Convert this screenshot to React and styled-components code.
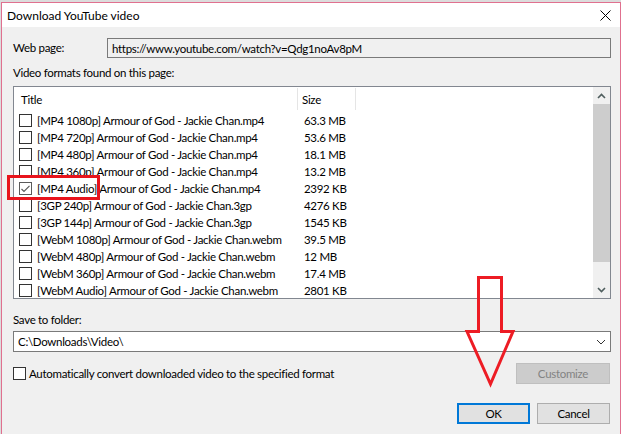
import React from 'react';
import styled, { createGlobalStyle } from 'styled-components';

const GlobalStyle = createGlobalStyle`
  html, body {
    margin: 0;
    height: 434px;
    overflow: hidden;
    background: #dcdcdc;
  }
  body {
    font-family: Lato, "Segoe UI", sans-serif;
    font-size: 11.5px;
    letter-spacing: -0.3px;
    color: #000;
  }
`;

const Window = styled.div`
  position: relative;
  margin: 2px 0 0 1px;
  width: 618px;
  height: 440px;
  border: 1px solid #e0708f;
  background: #f0f0f0;
`;

const TitleBar = styled.div`
  height: 24px;
  display: flex;
  align-items: center;
  justify-content: space-between;
  padding: 0 9px 0 5px;
  background: #fff;
  font-size: 12px;
  letter-spacing: 0;
`;

const Content = styled.div`
  display: flex;
  flex-direction: column;
  padding: 11px 9px 0 11px;
`;

const Row = styled.div`
  display: flex;
  align-items: center;
  justify-content: ${p => p.justify || 'flex-start'};
  gap: ${p => p.gap || '0px'};
  margin-top: ${p => p.mt || '0px'};
  height: ${p => p.h || 'auto'};
`;

const Label = styled.div`
  line-height: 16px;
  width: ${p => p.w || 'auto'};
  margin-top: ${p => p.mt || '0px'};
`;

const ReadOnlyField = styled.div`
  flex: 1;
  height: 18px;
  border: 1px solid #7a7a7a;
  background: #f0f0f0;
  padding-left: 4px;
  display: flex;
  align-items: center;
`;

const ListBox = styled.div`
  margin-top: 5px;
  height: 211px;
  border: 1px solid #828790;
  background: #fff;
  display: flex;
  overflow: hidden;
`;

const ListBody = styled.div`
  flex: 1;
  display: flex;
  flex-direction: column;
`;

const Header = styled.div`
  height: 25px;
  display: flex;
  flex-shrink: 0;
`;

const HeadCell = styled.div`
  width: ${p => p.w};
  padding-left: ${p => p.pl || '6px'};
  border-right: 1px solid #e5e5e5;
  margin: 1px 0 2px;
  display: flex;
  align-items: center;
`;

const ItemRow = styled.div`
  height: 17px;
  flex-shrink: 0;
  display: flex;
  align-items: center;
`;

const TitleCell = styled.div`
  box-sizing: border-box;
  width: 284px;
  display: flex;
  align-items: center;
  padding-left: 5px;
  gap: 5px;
  white-space: nowrap;
`;

const SizeCell = styled.div`
  padding-left: 6px;
  white-space: nowrap;
`;

const Box = styled.span`
  width: 11px;
  height: 11px;
  flex-shrink: 0;
  border: 1px solid ${p => (p.checked ? '#5a5a5a' : '#333')};
  background: #fff;
  display: inline-flex;
  align-items: center;
  justify-content: center;
`;

const ScrollBar = styled.div`
  width: 17px;
  background: #f0f0f0;
  display: flex;
  flex-direction: column;
  align-items: center;
`;

const ScrollArrow = styled.div`
  height: 17px;
  width: 17px;
  display: flex;
  align-items: center;
  justify-content: center;
`;

const Thumb = styled.div`
  width: 17px;
  height: 158px;
  background: #cdcdcd;
`;

const Spacer = styled.div`
  flex: 1;
`;

const Combo = styled.div`
  margin-top: 3px;
  height: 19px;
  border: 1px solid #7a7a7a;
  background: #fff;
  display: flex;
  align-items: center;
  justify-content: space-between;
  padding: 0 4px 0 4px;
`;

const Button = styled.div`
  width: ${p => p.w || '69px'};
  height: ${p => p.h || '17px'};
  display: flex;
  align-items: center;
  justify-content: center;
  background: ${p => (p.disabled ? '#cccccc' : '#e1e1e1')};
  color: ${p => (p.disabled ? '#838383' : '#000')};
  border: ${p => (p.primary ? '2px solid #0078d7' : p.disabled ? '1px solid #bfbfbf' : '1px solid #adadad')};
  margin: ${p => (p.primary ? '0' : '1px')};
`;

const Highlight = styled.div`
  position: absolute;
  left: 5px;
  top: 172px;
  width: 87px;
  height: 19px;
  border: 3px solid #e8141c;
`;

const Arrow = styled.svg`
  position: absolute;
  left: -2px;
  top: -3px;
  pointer-events: none;
`;

const Chevron = ({ up }) => (
  <svg width="9" height="6" viewBox="0 0 9 6">
    <path d={up ? 'M1 5 L4.5 1.5 L8 5' : 'M1 1 L4.5 4.5 L8 1'} fill="none" stroke="#4f5e5e" strokeWidth="1.6" />
  </svg>
);

const Check = () => (
  <svg width="9" height="8" viewBox="0 0 9 8">
    <path d="M0.5 4 L3 6.5 L8.5 0.8" fill="none" stroke="#5a5a5a" strokeWidth="1.2" />
  </svg>
);

const items = [
  ['[MP4 1080p] Armour of God - Jackie Chan.mp4', '63.3 MB'],
  ['[MP4 720p] Armour of God - Jackie Chan.mp4', '53.6 MB'],
  ['[MP4 480p] Armour of God - Jackie Chan.mp4', '18.1 MB'],
  ['[MP4 360p] Armour of God - Jackie Chan.mp4', '13.2 MB'],
  ['[MP4 Audio] Armour of God - Jackie Chan.mp4', '2392 KB', true],
  ['[3GP 240p] Armour of God - Jackie Chan.3gp', '4276 KB'],
  ['[3GP 144p] Armour of God - Jackie Chan.3gp', '1545 KB'],
  ['[WebM 1080p] Armour of God - Jackie Chan.webm', '39.5 MB'],
  ['[WebM 480p] Armour of God - Jackie Chan.webm', '12 MB'],
  ['[WebM 360p] Armour of God - Jackie Chan.webm', '17.4 MB'],
  ['[WebM Audio] Armour of God - Jackie Chan.webm', '2801 KB'],
];

export default function App() {
  return (
    <>
      <GlobalStyle />
      <Window>
        <TitleBar>
          <span>Download YouTube video</span>
          <svg width="11" height="11" viewBox="0 0 11 11">
            <path d="M0.5 0.5 L10.5 10.5 M10.5 0.5 L0.5 10.5" stroke="#000" strokeWidth="1" />
          </svg>
        </TitleBar>
        <Content>
          <Row h="20px">
            <Label w="94px">Web page:</Label>
            <ReadOnlyField>https://www.youtube.com/watch?v=Qdg1noAv8pM</ReadOnlyField>
          </Row>
          <Label mt="7px">Video formats found on this page:</Label>
          <ListBox>
            <ListBody>
              <Header>
                <HeadCell w="276px" pl="7px">Title</HeadCell>
                <HeadCell w="53px" pl="4px">Size</HeadCell>
              </Header>
              {items.map(([title, size, checked]) => (
                <ItemRow key={title}>
                  <TitleCell>
                    <Box checked={checked}>{checked && <Check />}</Box>
                    {title}
                  </TitleCell>
                  <SizeCell>{size}</SizeCell>
                </ItemRow>
              ))}
            </ListBody>
            <ScrollBar>
              <ScrollArrow><Chevron up /></ScrollArrow>
              <Thumb />
              <Spacer />
              <ScrollArrow><Chevron /></ScrollArrow>
            </ScrollBar>
          </ListBox>
          <Label mt="13px">Save to folder:</Label>
          <Combo>
            <span>C:\Downloads\Video\</span>
            <svg width="10" height="6" viewBox="0 0 10 6">
              <path d="M1 1 L5 5 L9 1" fill="none" stroke="#333" strokeWidth="1" />
            </svg>
          </Combo>
          <Row mt="11px" h="21px" justify="space-between">
            <Row gap="3px">
              <Box />
              <span>Automatically convert downloaded video to the specified format</span>
            </Row>
            <Button disabled w="92px" h="19px">Customize</Button>
          </Row>
          <Row mt="18px" justify="flex-end" gap="6px">
            <Button primary w="69px">OK</Button>
            <Button w="71px" h="19px">Cancel</Button>
          </Row>
        </Content>
        <Highlight />
        <Arrow width="621" height="434" viewBox="0 0 621 434">
          <polygon
            points="478.5,277.5 478.5,331.5 467,331.5 490.5,384 513,331.5 501.5,331.5 501.5,277.5"
            fill="none"
            stroke="#ed1c24"
            strokeWidth="3"
          />
        </Arrow>
      </Window>
    </>
  );
}
